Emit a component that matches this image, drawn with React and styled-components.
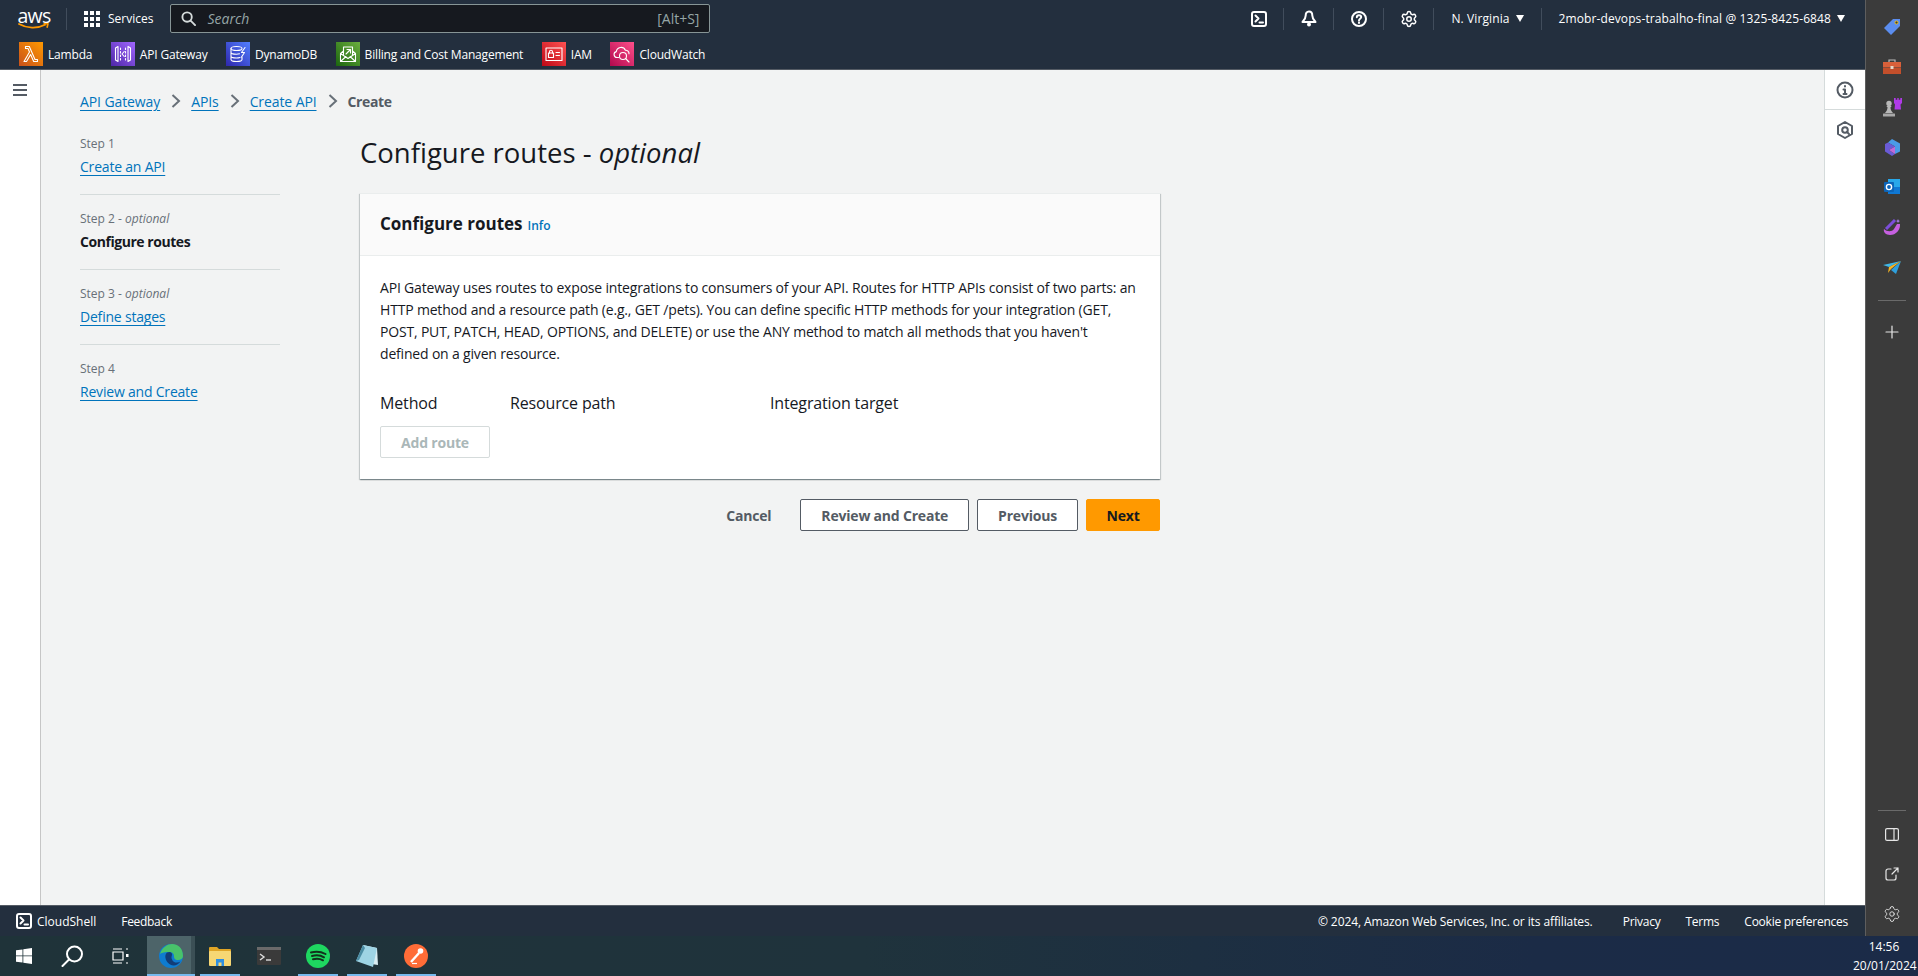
import React from 'react';
import styled, { createGlobalStyle } from 'styled-components';
import { Settings } from 'lucide-react';

const font = '"Open Sans", "Noto Sans", sans-serif';

const GlobalStyle = createGlobalStyle`
  html, body { margin: 0; padding: 0; height: 976px; overflow: hidden; }
  body { font-family: ${font}; background: #f2f3f3; color: #16191f; }
  * { box-sizing: border-box; }
`;

const Page = styled.div`
  width: 1918px;
  height: 976px;
  display: flex;
  flex-direction: column;
`;

const Upper = styled.div`
  flex: 1;
  display: flex;
  min-height: 0;
`;

const Browser = styled.div`
  flex: 1;
  display: flex;
  flex-direction: column;
  min-width: 0;
`;

/* top nav */
const TopNav = styled.header`
  height: 70px;
  flex: none;
  background: #232f3e;
  border-bottom: 1px solid #545b64;
  color: #fff;
  display: flex;
  flex-direction: column;
`;

const NavRow = styled.div`
  height: 37px;
  flex: none;
  display: flex;
  align-items: center;
  padding-left: 18px;
`;

const ShortcutRow = styled.div`
  height: 32px;
  flex: none;
  display: flex;
  align-items: center;
  gap: 18.5px;
  padding: 2px 0 0 19px;
`;

const AwsLogo = styled.div`
  width: 32px;
  height: 22px;
  flex: none;
  display: flex;
  flex-direction: column;
  align-items: center;
`;

const AwsWord = styled.span`
  font-size: 19.5px;
  line-height: 15px;
  height: 15px;
  letter-spacing: -0.8px;
  color: #fff;
  white-space: nowrap;
`;

const NavDivider = styled.span`
  width: 1px;
  height: 22px;
  background: #414d5c;
  flex: none;
  margin-left: 16px;
`;

const Services = styled.div`
  display: flex;
  align-items: center;
  gap: 8px;
  font-size: 12px;
  margin: 0 17px;
`;

const SearchBox = styled.div`
  width: 540px;
  height: 29px;
  background: #16191f;
  border: 1px solid #879596;
  border-radius: 2px;
  display: flex;
  align-items: center;
  padding: 0 10px;
  gap: 11px;
  font-size: 14px;
  color: #95a5a6;
`;

const SearchHint = styled.span`
  font-style: italic;
  flex: 1;
`;

const NavActions = styled.div`
  margin-left: auto;
  display: flex;
  align-items: center;
  padding-right: 20px;
  font-size: 12px;
  letter-spacing: 0.1px;
`;

const NavIcon = styled.div`
  width: 50px;
  height: 22px;
  display: flex;
  justify-content: center;
  align-items: center;
  border-right: 1px solid #414d5c;
`;

const NavMenu = styled.div`
  display: flex;
  align-items: center;
  gap: 6px;
  white-space: nowrap;
  padding: 0 ${({ $last }) => ($last ? 0 : 17)}px 0 17px;
  height: 22px;
  border-right: ${({ $last }) => ($last ? 'none' : '1px solid #414d5c')};
`;

const Caret = styled.span`
  width: 0;
  height: 0;
  border-left: 4.5px solid transparent;
  border-right: 4.5px solid transparent;
  border-top: 7px solid #fff;
`;

const Shortcut = styled.div`
  display: flex;
  align-items: center;
  gap: 5px;
  font-size: 12px;
  letter-spacing: -0.18px;
  white-space: nowrap;
`;

const ServiceBadge = styled.span`
  width: 24px;
  height: 24px;
  display: flex;
  align-items: center;
  justify-content: center;
  background: ${({ $from, $to }) => `linear-gradient(45deg, ${$from}, ${$to})`};
`;

/* content */
const Body = styled.div`
  flex: 1;
  display: flex;
  min-height: 0;
`;

const SideToggle = styled.div`
  width: 41px;
  flex: none;
  background: #fff;
  border-right: 1px solid #c6c6c6;
  padding: 14px 0 0 13px;
  svg { display: block; }
`;

const Main = styled.main`
  flex: 1;
  background: #f2f3f3;
  padding: 0 0 0 39px;
  min-width: 0;
`;

const Crumbs = styled.nav`
  height: 62px;
  display: flex;
  align-items: center;
  font-size: 14px;
  letter-spacing: -0.1px;
`;

const CrumbSep = styled.svg`
  width: 10px;
  height: 14px;
  margin: 0 10px 0 11px;
  flex: none;
`;

const Link = styled.a`
  color: #0073bb;
  text-decoration: underline;
  text-underline-offset: 3px;
  text-decoration-thickness: 1px;
  white-space: nowrap;
`;

const CrumbCurrent = styled.span`
  font-weight: 700;
  letter-spacing: -0.35px;
  color: #545b64;
`;

const Columns = styled.div`
  display: grid;
  grid-template-columns: 200px 800px;
  column-gap: 80px;
`;

const Steps = styled.ol`
  list-style: none;
  margin: 0;
  padding: 0;
`;

const StepItem = styled.li`
  padding-top: ${({ $first }) => ($first ? 3 : 15)}px;
  height: ${({ $first }) => ($first ? 63 : 75)}px;
  border-bottom: ${({ $last }) => ($last ? 'none' : '1px solid #d5dbdb')};
`;

const StepLabel = styled.div`
  font-size: 12px;
  line-height: 18px;
  color: #687078;
  margin-bottom: 5px;
`;

const StepName = styled.div`
  font-size: 14px;
  line-height: 18px;
  letter-spacing: ${({ $active }) => ($active ? '-0.45px' : '-0.2px')};
  font-weight: ${({ $active }) => ($active ? 700 : 400)};
`;

const Title = styled.h1`
  margin: 0;
  padding-top: 3px;
  font-size: 27.5px;
  line-height: 36px;
  font-weight: 400;
  height: 61px;
  color: #16191f;
`;

const Card = styled.section`
  background: #fff;
  box-shadow: 0 1px 1px 0 rgba(0, 28, 36, 0.3), 1px 1px 1px 0 rgba(0, 28, 36, 0.15), -1px 1px 1px 0 rgba(0, 28, 36, 0.15);
  border-top: 1px solid #eaeded;
  height: 286px;
`;

const CardHeader = styled.div`
  height: 62px;
  background: #fafafa;
  border-bottom: 1px solid #eaeded;
  padding: 0 0 1px 20px;
  display: flex;
  align-items: center;
  gap: 5px;
`;

const CardTitle = styled.h2`
  margin: 0;
  font-size: 17px;
  font-weight: 700;
  line-height: 22px;
`;

const InfoLink = styled.a`
  color: #0073bb;
  font-size: 12px;
  font-weight: 600;
  margin-top: 3px;
`;

const CardBody = styled.div`
  padding: 21px 20px 0;
`;

const Paragraph = styled.p`
  margin: 0;
  font-size: 14px;
  line-height: 22px;
  letter-spacing: -0.18px;
  width: 758px;
`;

const RouteHead = styled.div`
  display: grid;
  grid-template-columns: 130px 260px 1fr;
  font-size: 16px;
  letter-spacing: -0.15px;
  line-height: 22px;
  margin-top: 27px;
`;

const Button = styled.button`
  height: 32px;
  padding: 0 20px;
  font-family: ${font};
  font-size: 14px;
  font-weight: 700;
  letter-spacing: -0.2px;
  border-radius: 2px;
  border: 1px solid #545b64;
  background: #fff;
  color: #545b64;
  white-space: nowrap;
`;

const AddRoute = styled(Button)`
  display: block;
  width: 110px;
  margin-top: 12px;
  padding: 0;
  color: #aab7b8;
  border-color: #d5dbdb;
`;

const Primary = styled(Button)`
  width: 74px;
  padding: 0;
  background: #ff9900;
  border-color: #ff9900;
  color: #16191f;
`;

const TextButton = styled(Button)`
  border: none;
  background: transparent;
  padding: 0;
  margin-right: 21px;
`;

const Actions = styled.div`
  margin-top: 20px;
  display: flex;
  justify-content: flex-end;
  gap: 8px;
`;

const ToolRail = styled.aside`
  width: 41px;
  flex: none;
  background: #fff;
  border-left: 1px solid #d5dbdb;
`;

const ToolCell = styled.div`
  height: 40px;
  display: flex;
  align-items: center;
  justify-content: center;
  border-bottom: ${({ $line }) => ($line ? '1px solid #d5dbdb' : 'none')};
`;

/* footer */
const Footer = styled.footer`
  height: 31px;
  flex: none;
  background: #232f3e;
  border-top: 1px solid #545b64;
  color: #fff;
  display: flex;
  align-items: center;
  font-size: 12px;
  padding: 0 17px 0 16px;
`;

const FooterShell = styled.div`
  display: flex;
  align-items: center;
  gap: 5px;
  margin-right: 25px;
`;

const FooterLink = styled.span`
  letter-spacing: -0.3px;
`;

const FooterRight = styled.div`
  margin-left: auto;
  display: flex;
  gap: 25px;
  letter-spacing: -0.25px;
`;

const Copyright = styled.span`
  letter-spacing: -0.1px;
  margin-right: 5px;
`;

/* browser sidebar */
const EdgeRail = styled.aside`
  width: 53px;
  flex: none;
  background: #3b3b3b;
  border-left: 1px solid #5e5e5e;
  display: flex;
  flex-direction: column;
  align-items: center;
  padding: 7px 0 2px;
`;

const EdgeSlot = styled.div`
  height: 40px;
  width: 100%;
  flex: none;
  margin-top: ${({ $mt }) => $mt || 0}px;
  display: flex;
  align-items: center;
  justify-content: center;
`;

const EdgeLine = styled.div`
  width: 28px;
  height: 1px;
  background: #6a6a6a;
  flex: none;
  margin: ${({ $m }) => $m};
`;

/* windows taskbar */
const Taskbar = styled.div`
  height: 40px;
  flex: none;
  background: linear-gradient(90deg, #1f3339 0%, #1f333c 45%, #1b2b46 80%, #1b2b48 100%);
  display: flex;
  align-items: stretch;
  color: #fff;
`;

const TaskSlot = styled.div`
  width: ${({ $w }) => $w || 48}px;
  margin-right: ${({ $mr }) => $mr || 0}px;
  flex: none;
  display: flex;
  align-items: center;
  justify-content: center;
  background: ${({ $active }) => ($active ? 'linear-gradient(90deg, #4d6469 0 92%, #3b4f55 92% 100%)' : 'transparent')};
  box-shadow: ${({ $open }) => ($open ? 'inset 0 -2px 0 #76b9ed' : 'none')};
`;

const Clock = styled.div`
  margin-left: auto;
  width: 62px;
  margin-right: 3px;
  text-align: center;
  font-size: 12px;
  line-height: 19px;
  padding-top: 1px;
`;

const WhiteStroke = { fill: 'none', stroke: '#fff', strokeWidth: 2, strokeLinecap: 'round', strokeLinejoin: 'round' };
const GrayStroke = { fill: 'none', stroke: '#545b64', strokeWidth: 2, strokeLinecap: 'round', strokeLinejoin: 'round' };
const ThinStroke = { fill: 'none', stroke: '#e6e6e6', strokeWidth: 1.2, strokeLinecap: 'round', strokeLinejoin: 'round' };

const ShellIcon = () => (
  <svg width="16" height="16" viewBox="0 0 16 16" {...WhiteStroke}>
    <rect x="1" y="1" width="14" height="14" rx="2" />
    <path d="M4.500 4.500 7.500 7.500 4.500 10.500M8.500 11.500h3.500" />
  </svg>
);

const ChevronSep = () => (
  <CrumbSep viewBox="0 0 10 14" fill="none" stroke="#687078" strokeWidth="2"><path d="M1.500 1 8 7l-6.500 6" /></CrumbSep>
);

const ShortcutIcon = ({ kind }) => {
  const s = { fill: 'none', stroke: '#fff', strokeWidth: 1.1, strokeLinejoin: 'round', strokeLinecap: 'round' };
  if (kind === 'lambda') {
    return <svg width="18" height="18" viewBox="0 0 18 18" {...s}><path d="M2 16.500 7.500 7 6 3.500H3.500V1.500H7.300L13 14.500h2.500v2h-3.800L8.600 9.500 4.500 16.500z" /></svg>;
  }
  if (kind === 'api') {
    return <svg width="18" height="18" viewBox="0 0 18 18" {...s}><path d="M4 1.500 1.500 3v12L4 16.500zM14 1.500 16.500 3v12L14 16.500zM6.500 3v1.500M6.500 6.500v1.500M6.500 10v1.500M6.500 13.500v1.500M11.500 3v1.500M11.500 6.500v1.500M11.500 10v1.500M11.500 13.500v1.500M10.200 6.500 8 9l2.200 2.500" /></svg>;
  }
  if (kind === 'dynamo') {
    return <svg width="18" height="18" viewBox="0 0 18 18" {...s}><ellipse cx="7.500" cy="3.500" rx="5.500" ry="2" /><path d="M2 3.500v11c0 1.100 2.500 2 5.500 2s5.500-.9 5.500-2v-2.500M2 7.200c0 1.100 2.500 2 5.500 2 1 0 2-.1 3-.4M2 11c0 1.100 2.500 2 5.500 2 1.500 0 2.500-.2 3.500-.5M16 2.500 12.500 7.500H15.500L12.500 12" /></svg>;
  }
  if (kind === 'billing') {
    return <svg width="18" height="18" viewBox="0 0 18 18" {...s}><path d="M4.500 6 1.500 8.500V16.500H16.500V8.500L13.500 6M1.500 16.500 7 11.500M16.500 16.500 11 11.500M1.500 8.500 9 13.500l7.500-5M4.500 10.500V2h9v8.500M7 9l4.500-4.500M8 4.500h3.500V8" /></svg>;
  }
  if (kind === 'iam') {
    return <svg width="18" height="18" viewBox="0 0 18 18" {...s}><rect x="1" y="3" width="16" height="12.500" /><rect x="3.500" y="8" width="5" height="4.500" /><path d="M4.500 8V6.800a1.500 1.500 0 0 1 3 0V8M11 7.500h3.500M11 10.500h3.500" /></svg>;
  }
  return <svg width="18" height="18" viewBox="0 0 18 18" {...s}><path d="M5.500 12.500H4A3 3 0 0 1 3.300 6.600 4.800 4.800 0 0 1 12.400 5.200a3.300 3.300 0 0 1 3.600 3.500" /><circle cx="10" cy="11" r="3.500" /><path d="M12.600 13.500 16 17" /></svg>;
};

const shortcuts = [
  { name: 'Lambda', kind: 'lambda', from: '#c8511b', to: '#ff9900' },
  { name: 'API Gateway', kind: 'api', from: '#4d27a8', to: '#a166ff' },
  { name: 'DynamoDB', kind: 'dynamo', from: '#2e27ad', to: '#527fff' },
  { name: 'Billing and Cost Management', kind: 'billing', from: '#1b660f', to: '#6cae3e' },
  { name: 'IAM', kind: 'iam', from: '#bd0816', to: '#ff5252' },
  { name: 'CloudWatch', kind: 'cloudwatch', from: '#b0084d', to: '#ff4f8b' },
];

const steps = [
  { label: 'Step 1', name: 'Create an API' },
  { label: 'Step 2', optional: true, name: 'Configure routes', active: true },
  { label: 'Step 3', optional: true, name: 'Define stages' },
  { label: 'Step 4', name: 'Review and Create' },
];

export default function App() {
  return (
    <Page>
      <GlobalStyle />
      <Upper>
        <Browser>
          <TopNav>
            <NavRow>
              <AwsLogo>
                <AwsWord>aws</AwsWord>
                <svg width="32" height="7" viewBox="0 0 32 7">
                  <path d="M1 1c8 4.500 18 5 26 .8" fill="none" stroke="#ff9900" strokeWidth="1.800" strokeLinecap="round" />
                  <path d="M25.500 .8h4.500l-1 4" fill="none" stroke="#ff9900" strokeWidth="1.600" strokeLinejoin="round" />
                </svg>
              </AwsLogo>
              <NavDivider />
              <Services>
                <svg width="16" height="16" viewBox="0 0 16 16" fill="#fff">
                  {[0, 6, 12].flatMap((x) => [0, 6, 12].map((y) => <rect key={`${x}-${y}`} x={x} y={y} width="4" height="4" />))}
                </svg>
                Services
              </Services>
              <SearchBox>
                <svg width="15" height="15" viewBox="0 0 16 16" fill="none" stroke="#d5dbdb" strokeWidth="2" strokeLinecap="round">
                  <circle cx="6.500" cy="6.500" r="5" />
                  <path d="M10.500 10.500 15 15" />
                </svg>
                <SearchHint>Search</SearchHint>
                <span>[Alt+S]</span>
              </SearchBox>
              <NavActions>
                <NavIcon><ShellIcon /></NavIcon>
                <NavIcon>
                  <svg width="16" height="17" viewBox="0 0 16 17" {...WhiteStroke}>
                    <path d="M8 1.500c2.300 0 3.300 1.700 3.300 4 0 3 1.700 5 3.200 6.500h-13C3 10.500 4.700 8.500 4.700 5.500c0-2.300 1-4 3.300-4z" />
                    <circle cx="8" cy="14.500" r="1" />
                  </svg>
                </NavIcon>
                <NavIcon>
                  <svg width="16" height="16" viewBox="0 0 16 16" {...WhiteStroke}>
                    <circle cx="8" cy="8" r="7" />
                    <path d="M5.800 6.200C5.800 3.500 10.200 3.500 10.200 6c0 1.800-2.200 1.800-2.200 3.500M8 11.500v.5" />
                  </svg>
                </NavIcon>
                <NavIcon><Settings size={18} color="#fff" strokeWidth={2} /></NavIcon>
                <NavMenu>N. Virginia <Caret /></NavMenu>
                <NavMenu $last>2mobr-devops-trabalho-final @ 1325-8425-6848 <Caret /></NavMenu>
              </NavActions>
            </NavRow>
            <ShortcutRow>
              {shortcuts.map((s) => (
                <Shortcut key={s.name}>
                  <ServiceBadge $from={s.from} $to={s.to}><ShortcutIcon kind={s.kind} /></ServiceBadge>
                  {s.name}
                </Shortcut>
              ))}
            </ShortcutRow>
          </TopNav>
          <Body>
            <SideToggle>
              <svg width="14" height="12" viewBox="0 0 14 12" fill="none" stroke="#545b64" strokeWidth="2">
                <path d="M0 1h14M0 6h14M0 11h14" />
              </svg>
            </SideToggle>
            <Main>
              <Crumbs>
                <Link>API Gateway</Link>
                <ChevronSep />
                <Link>APIs</Link>
                <ChevronSep />
                <Link>Create API</Link>
                <ChevronSep />
                <CrumbCurrent>Create</CrumbCurrent>
              </Crumbs>
              <Columns>
                <Steps>
                  {steps.map((s, i) => (
                    <StepItem key={s.label} $first={i === 0} $last={i === steps.length - 1}>
                      <StepLabel>{s.label}{s.optional && <> - <i>optional</i></>}</StepLabel>
                      <StepName $active={s.active}>{s.active ? s.name : <Link>{s.name}</Link>}</StepName>
                    </StepItem>
                  ))}
                </Steps>
                <div>
                  <Title>Configure routes - <i>optional</i></Title>
                  <Card>
                    <CardHeader>
                      <CardTitle>Configure routes</CardTitle>
                      <InfoLink>Info</InfoLink>
                    </CardHeader>
                    <CardBody>
                      <Paragraph>
                        API Gateway uses routes to expose integrations to consumers of your API. Routes for HTTP APIs consist of two parts: an HTTP method and a resource path (e.g., GET /pets). You can define specific HTTP methods for your integration (GET, POST, PUT, PATCH, HEAD, OPTIONS, and DELETE) or use the ANY method to match all methods that you haven't defined on a given resource.
                      </Paragraph>
                      <RouteHead>
                        <span>Method</span>
                        <span>Resource path</span>
                        <span>Integration target</span>
                      </RouteHead>
                      <AddRoute>Add route</AddRoute>
                    </CardBody>
                  </Card>
                  <Actions>
                    <TextButton>Cancel</TextButton>
                    <Button>Review and Create</Button>
                    <Button>Previous</Button>
                    <Primary>Next</Primary>
                  </Actions>
                </div>
              </Columns>
            </Main>
            <ToolRail>
              <ToolCell $line>
                <svg width="18" height="18" viewBox="0 0 18 18" {...GrayStroke}>
                  <circle cx="9" cy="9" r="7.500" />
                  <path d="M7.500 8.500H9V13M7.500 13h3M9 5v.5" />
                </svg>
              </ToolCell>
              <ToolCell>
                <svg width="16" height="18" viewBox="0 0 16 18" {...GrayStroke}>
                  <path d="M8 1 15 5v8l-7 4-7-4V5z" />
                  <circle cx="8" cy="9" r="2.800" />
                  <path d="M10 11l2 2" />
                </svg>
              </ToolCell>
            </ToolRail>
          </Body>
          <Footer>
            <FooterShell><ShellIcon />CloudShell</FooterShell>
            <FooterLink>Feedback</FooterLink>
            <FooterRight>
              <Copyright>© 2024, Amazon Web Services, Inc. or its affiliates.</Copyright>
              <span>Privacy</span>
              <span>Terms</span>
              <span>Cookie preferences</span>
            </FooterRight>
          </Footer>
        </Browser>
        <EdgeRail>
          <EdgeSlot>
            <svg width="18" height="18" viewBox="0 0 18 18">
              <path d="M10 1h7v7l-9 9-7-7z" fill="#5b8def" />
              <circle cx="13.500" cy="4.500" r="1.500" fill="#3b3b3b" stroke="#f4c20d" />
            </svg>
          </EdgeSlot>
          <EdgeSlot>
            <svg width="18" height="16" viewBox="0 0 18 16">
              <path d="M6 3V1h6v2" fill="none" stroke="#bbb" strokeWidth="1.200" />
              <rect y="3" width="18" height="5.500" fill="#d9603a" />
              <rect y="9" width="18" height="6" fill="#c34f2b" />
              <rect x="7.500" y="7" width="3" height="3" fill="#e8d8c8" />
            </svg>
          </EdgeSlot>
          <EdgeSlot>
            <svg width="19" height="19" viewBox="0 0 19 19">
              <circle cx="6" cy="5.500" r="2.700" fill="#b8b8b8" />
              <path d="M4 8h4l.5 1H7.500c0 2.500.7 4 2.500 6H2C3.800 13 4.500 11.500 4.500 9H3.500z" fill="#b8b8b8" />
              <rect x="0" y="15.500" width="12" height="3" rx=".5" fill="#a8a8a8" />
              <path d="M11 0h1.700v1.700h1.600V0h1.400v1.700h1.600V0H19v5l-1.500 1.500.5 5h-6.500l.5-5L11 5z" fill="#b03ae8" />
            </svg>
          </EdgeSlot>
          <EdgeSlot>
            <svg width="16" height="17" viewBox="0 0 16 17">
              <path d="M8 0 16 4.500v8L11 15V7.500L4 3.500z" fill="#4a9be8" />
              <path d="M1 5 4 3.500 11 7.500 5 11l6 4-3 2-7-4.500z" fill="#6a5bd6" />
              <path d="M5 11l6-3.500v7.500z" fill="#c06ad8" />
            </svg>
          </EdgeSlot>
          <EdgeSlot>
            <svg width="16" height="16" viewBox="0 0 16 16">
              <rect x="4" y="0" width="12" height="15" fill="#28a8ea" />
              <rect x="4" y="8" width="12" height="7" fill="#0f78d4" />
              <rect x="0" y="3" width="10" height="10" rx="1" fill="#0c64b8" />
              <circle cx="5" cy="8" r="2.600" fill="none" stroke="#fff" strokeWidth="1.400" />
            </svg>
          </EdgeSlot>
          <EdgeSlot>
            <svg width="18" height="18" viewBox="0 0 18 18">
              <path d="M17 6c.5 6-4 11-10 11C3 17 0 14 1 11c3 3 8 3 10 0l3-5z" fill="#c660e0" />
              <path d="M3 11 12 2" stroke="#7c4ddb" strokeWidth="3" />
              <path d="M15 1l.7 1.500L17 3l-1.300.7L15 5l-.7-1.300L13 3l1.300-.5z" fill="#a97fe8" />
            </svg>
          </EdgeSlot>
          <EdgeSlot>
            <svg width="18" height="13" viewBox="0 0 18 13">
              <path d="M0 4 18 0 6 6z" fill="#3fb8e8" />
              <path d="M18 0 13 13 8 9z" fill="#2f9fdc" />
              <path d="M6 6 18 0 8 8 5 12z" fill="#f7b522" />
            </svg>
          </EdgeSlot>
          <EdgeLine $m="13px 0 0" />
          <EdgeSlot $mt={11}>
            <svg width="14" height="14" viewBox="0 0 14 14" {...ThinStroke}><path d="M7 1v12M1 7h12" /></svg>
          </EdgeSlot>
          <EdgeLine $m="auto 0 3px" />
          <EdgeSlot>
            <svg width="14" height="13" viewBox="0 0 14 13" {...ThinStroke}>
              <rect x=".6" y=".6" width="12.800" height="11.800" rx="1.500" />
              <path d="M9 .6v11.800" />
            </svg>
          </EdgeSlot>
          <EdgeSlot>
            <svg width="14" height="14" viewBox="0 0 14 14" {...ThinStroke}>
              <path d="M6 2H3a2 2 0 0 0-2 2v7a2 2 0 0 0 2 2h6a2 2 0 0 0 2-2V8M7 7l6-6M9 1h4v4" />
            </svg>
          </EdgeSlot>
          <EdgeSlot>
            <Settings size={18} color="#e6e6e6" strokeWidth={1.2} />
          </EdgeSlot>
        </EdgeRail>
      </Upper>
      <Taskbar>
        <TaskSlot>
          <svg width="16" height="16" viewBox="0 0 16 16" fill="#fff">
            <path d="M0 2.300 6.500 1.400V7.500H0zM7.300 1.300 16 0V7.500H7.300zM0 8.300H6.500V14.600L0 13.700zM7.300 8.300H16V16L7.300 14.700z" />
          </svg>
        </TaskSlot>
        <TaskSlot $w={49}>
          <svg width="23" height="22" viewBox="0 0 23 22" fill="none" stroke="#fff" strokeWidth="2" strokeLinecap="round">
            <circle cx="13.500" cy="9" r="7.500" />
            <path d="M8 14.500 1.500 21" />
          </svg>
        </TaskSlot>
        <TaskSlot $w={46} $mr={4}>
          <svg width="17" height="16" viewBox="0 0 17 16" fill="none" stroke="#fff" strokeWidth="1.200">
            <path d="M1 1h9M1 15h9M1 4h10v8H1zM14 1h2M14 15h2" />
            <rect x="14" y="6" width="2.500" height="3" fill="#fff" stroke="none" />
          </svg>
        </TaskSlot>
        <TaskSlot $active $open $mr={5}>
          <svg width="24" height="24" viewBox="0 0 24 24">
            <circle cx="12" cy="12" r="12" fill="#0f7cd0" />
            <path d="M1 10C3 3 9 0 13 0c6 0 11 4 11 12 0 3-3 4.500-6 4-3-.5-3-3-3-4 0-2.500-2-4-4.500-4C6 8 3 8.500 1 10z" fill="#49c26a" />
            <path d="M10.500 8C7 8 6 11 6.500 14c.6 4 4 7 8 7.500 2 .2 5-1 7-4-3 2-7 1-8-1-1.500-2.500-1-4-.5-5.500.5-1.500-1-3-2.500-3z" fill="#123d78" />
          </svg>
        </TaskSlot>
        <TaskSlot $w={40} $open $mr={10}>
          <svg width="22" height="20" viewBox="0 0 22 20">
            <path d="M0 2a1 1 0 0 1 1-1h7l2 2h11a1 1 0 0 1 1 1v3H0z" fill="#e0a526" />
            <rect y="5" width="22" height="15" rx="1" fill="#f7d774" />
            <path d="M7 20v-7h8v7h-2.500v-3.500h-3V20z" fill="#2f8fe0" />
          </svg>
        </TaskSlot>
        <TaskSlot $w={38} $mr={10}>
          <svg width="24" height="18" viewBox="0 0 24 18">
            <rect width="24" height="18" rx="1" fill="#3a3a3a" />
            <rect width="24" height="3" fill="#6a6a6a" />
            <path d="M3 7l4 3-4 3" fill="none" stroke="#ddd" strokeWidth="1.400" />
            <path d="M9 13h5" stroke="#ddd" strokeWidth="1.400" />
          </svg>
        </TaskSlot>
        <TaskSlot $w={40} $open $mr={9}>
          <svg width="24" height="24" viewBox="0 0 24 24">
            <circle cx="12" cy="12" r="12" fill="#1ed760" />
            <path d="M5 8.500c5-1.500 10-1 14.500 1.500M6 12c4-1 8.500-.8 12 1.300M7 15.300c3.500-.8 7-.6 10 1" fill="none" stroke="#12301c" strokeWidth="2" strokeLinecap="round" />
          </svg>
        </TaskSlot>
        <TaskSlot $w={40} $open $mr={9}>
          <svg width="23" height="24" viewBox="0 0 23 24">
            <path d="M7 1 21 4l1 17-13-2z" fill="#d9edf2" />
            <path d="M7 1 21 4 17 23 0 17z" fill="#9ed4e4" />
            <path d="M7 1 9 4 3 16 0 17z" fill="#4b8ca3" />
          </svg>
        </TaskSlot>
        <TaskSlot $w={40} $open>
          <svg width="24" height="24" viewBox="0 0 24 24">
            <circle cx="12" cy="12" r="12" fill="#ff6c37" />
            <path d="M7 18 15 9" stroke="#fff" strokeWidth="2.400" />
            <circle cx="16.500" cy="7" r="2.800" fill="#fff" />
            <path d="M8 19.500h5" stroke="#fff" strokeWidth="1.200" />
          </svg>
        </TaskSlot>
        <Clock>14:56<br />20/01/2024</Clock>
      </Taskbar>
    </Page>
  );
}
